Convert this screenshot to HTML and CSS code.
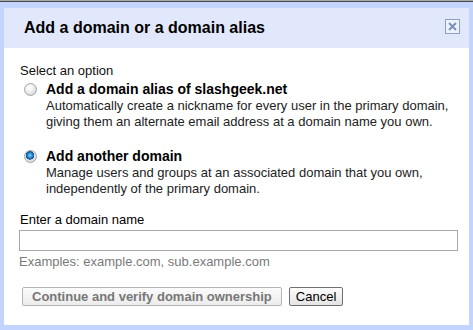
FILE: index.html
```html
<!DOCTYPE html>
<html lang="en">
<head>
  <meta charset="UTF-8" />
  <title>Add a domain or a domain alias</title>
  <link rel="stylesheet" href="styles.css">
</head>
<body>
  <div class="topline"></div>

  <!-- Dialog -->
  <div class="dialog">
    <div class="dialog-header">
      <span class="dialog-title">Add a domain or a domain alias</span>
      <span class="close-btn">
        <svg width="15" height="15" viewBox="0 0 15 15">
          <rect x="0.5" y="0.5" width="14" height="14" fill="#eef2fc" stroke="#8d9fc0"/>
          <path d="M4 4 L11 11 M11 4 L4 11" stroke="#7b92b6" stroke-width="2"/>
        </svg>
      </span>
    </div>

    <div class="dialog-body">
      <p class="label">Select an option</p>

      <label class="option">
        <input type="radio" name="kind">
        <span class="option-text">
          <b>Add a domain alias of slashgeek.net</b>
          <span class="desc">Automatically create a nickname for every user in the primary domain, giving them an alternate email address at a domain name you own.</span>
        </span>
      </label>

      <label class="option">
        <input type="radio" name="kind" checked>
        <span class="option-text">
          <b>Add another domain</b>
          <span class="desc">Manage users and groups at an associated domain that you own, independently of the primary domain.</span>
        </span>
      </label>

      <p class="label field-label">Enter a domain name</p>
      <input type="text" class="domain-input">
      <p class="hint">Examples: example.com, sub.example.com</p>

      <div class="button-row">
        <button class="btn" disabled>Continue and verify domain ownership</button>
        <button class="btn">Cancel</button>
      </div>
    </div>
  </div>
</body>
</html>
```

FILE: styles.css
```css
/* Global */
body {
  margin: 0;
  font-family: "Liberation Sans", Arial, sans-serif;
  font-size: 13px;
  line-height: 16px;
  color: #111;
  background: #c3d5ff;
}
p {
  margin: 0;
}
.topline {
  height: 1px;
  background: #a8a8a8;
  border-bottom: 1px solid #4a4a4a;
}
/* Dialog frame */
.dialog {
  height: 317px;
  border-style: solid;
  border-color: #c3d5ff;
  border-width: 6px 4px 5px 4px;
  background: #fff;
}
.dialog-header {
  height: 40px;
  background: #e1e8fc;
  display: flex;
  align-items: center;
  justify-content: space-between;
  padding: 0 9px 0 20px;
}
.dialog-title {
  font-size: 16px;
  font-weight: bold;
  color: #000;
}
.close-btn {
  display: flex;
  margin-top: -3px;
}
/* Body */
.dialog-body {
  padding: 15px 16px 0 16px;
}
.option {
  display: flex;
  align-items: flex-start;
  margin-top: 2px;
}
.option + .option {
  margin-top: 18px;
}
.option input {
  appearance: none;
  -webkit-appearance: none;
  width: 13px;
  height: 13px;
  margin: 2px 9px 0 4px;
  flex: none;
  border-radius: 50%;
  border: 1px solid #a4a4a4;
  box-sizing: border-box;
  background: radial-gradient(circle at 40% 35%, #fff 0%, #f0f0f0 40%, #c8c8c8 100%);
}
.option input:checked {
  background:
    radial-gradient(circle at 45% 40%, #8fd0ff 0%, #2a8fd6 25%, #0b4f8e 45%, transparent 50%),
    radial-gradient(circle at 40% 35%, #fff 0%, #f0f0f0 40%, #c8c8c8 100%);
}
.option-text b {
  display: block;
  font-size: 14px;
  line-height: 17px;
  color: #000;
}
.desc {
  display: block;
  width: 405px;
  color: #222;
}
/* Field */
.field-label {
  margin-top: 15px;
  color: #000;
}
.domain-input {
  display: block;
  box-sizing: border-box;
  width: 439px;
  height: 21px;
  margin: 2px 0 0 -1px;
  border: 1px solid #a9a9a9;
  font: inherit;
}
.hint {
  margin-top: 3px;
  margin-left: -1px;
  color: #7a7a7a;
}
/* Buttons */
.button-row {
  display: flex;
  gap: 7px;
  margin: 17px 0 0 2px;
}
.btn {
  height: 19px;
  padding: 0 6px;
  font-family: inherit;
  font-size: 13px;
  border: 1px solid #707070;
  border-radius: 2px;
  background: linear-gradient(#fdfdfd, #e4e4e4);
  color: #000;
}
.btn:disabled {
  font-weight: bold;
  color: #777;
  border-color: #b5b5b5;
  background: linear-gradient(#fbfbfb, #ececec);
  padding: 0 9px;
}
```
